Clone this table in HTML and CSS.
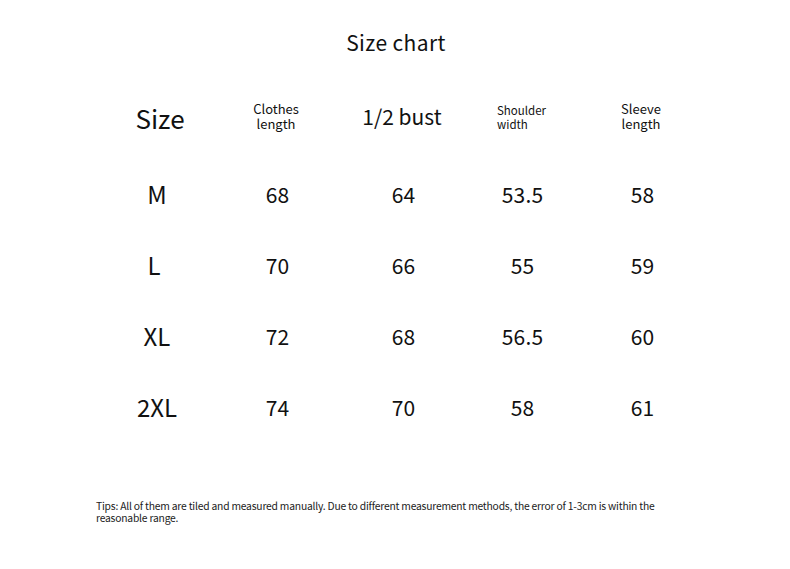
FILE: index.html
```html
<!DOCTYPE html>
<html>
<head>
<meta charset="utf-8">
<link rel="stylesheet" href="styles.css">
</head>
<body>
<div class="page">
  <h1 class="title">Size chart</h1>
  <div class="chart">
    <div class="cell head big">Size</div>
    <div class="cell head small">Clothes<br>length</div>
    <div class="cell head mid">1/2 bust</div>
    <div class="cell head tiny left">Shoulder<br>width</div>
    <div class="cell head small">Sleeve<br>length</div>

    <div class="cell size">M</div>
    <div class="cell num">68</div>
    <div class="cell num">64</div>
    <div class="cell num">53.5</div>
    <div class="cell num">58</div>

    <div class="cell size">L</div>
    <div class="cell num">70</div>
    <div class="cell num">66</div>
    <div class="cell num">55</div>
    <div class="cell num">59</div>

    <div class="cell size">XL</div>
    <div class="cell num">72</div>
    <div class="cell num">68</div>
    <div class="cell num">56.5</div>
    <div class="cell num">60</div>

    <div class="cell size">2XL</div>
    <div class="cell num">74</div>
    <div class="cell num">70</div>
    <div class="cell num">58</div>
    <div class="cell num">61</div>
  </div>
  <p class="tips">Tips: All of them are tiled and measured manually. Due to different measurement methods, the error of 1-3cm is within the reasonable range.</p>
</div>
</body>
</html>
```
FILE: styles.css
```css
html, body {
  margin: 0;
  padding: 0;
  background: #ffffff;
}
body {
  font-family: "Noto Sans CJK SC", "Noto Sans", sans-serif;
  color: #111111;
}
.page {
  width: 790px;
  height: 569px;
  display: flex;
  flex-direction: column;
}
.title {
  margin: 28px 0 0 0;
  font-size: 21px;
  line-height: 28px;
  font-weight: 400;
  letter-spacing: 0.4px;
  text-align: center;
  padding-left: 2px;
}
.chart {
  margin: 22px 0 0 100px;
  display: grid;
  grid-template-columns: 120px 112px 140px 98px 142px;
  grid-template-rows: 80px 71px 71px 71px 71px;
  align-items: center;
  justify-items: center;
}
.cell {
  text-align: center;
}
.head.big {
  font-size: 26px;
  line-height: 30px;
}
.head.mid {
  font-size: 21px;
  line-height: 28px;
  margin-top: -4px;
}
.head.small {
  font-size: 13px;
  line-height: 15.5px;
  margin-top: -4px;
}
.head.tiny {
  font-size: 11.5px;
  line-height: 14px;
  margin-top: -3px;
}
.head.left {
  justify-self: start;
  text-align: left;
  margin-left: 25px;
}
.size {
  font-size: 24px;
  line-height: 30px;
  margin-right: 6px;
}
.size:nth-child(11) {
  margin-right: 12px;
}
.num {
  font-size: 21px;
  line-height: 28px;
  margin-left: 3px;
  letter-spacing: 0.2px;
}
.tips {
  margin: 58px 0 0 96px;
  width: 566px;
  font-size: 10.3px;
  line-height: 12px;
  letter-spacing: -0.2px;
  color: #222222;
}
```
